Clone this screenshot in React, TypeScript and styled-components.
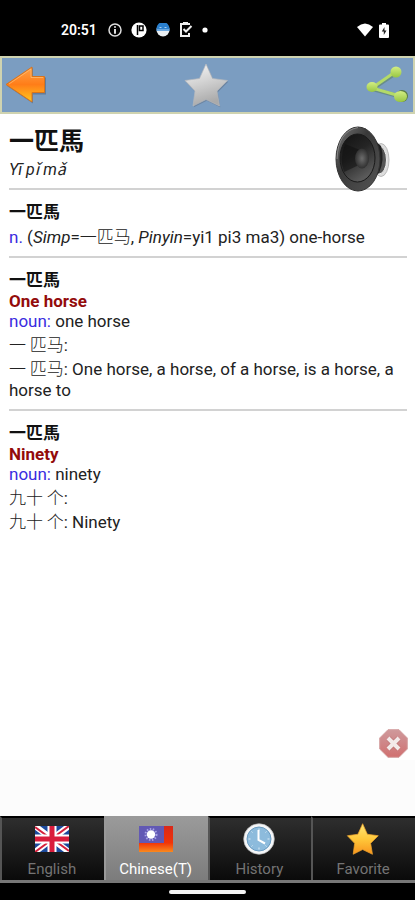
import React from "react";
import styled, { createGlobalStyle, css } from "styled-components";

const GlobalStyle = createGlobalStyle`
  * { box-sizing: border-box; }
  body {
    margin: 0;
    background: #fff;
    color: #222;
    font-family: Roboto, "Noto Sans CJK TC", sans-serif;
    font-size: 17px;
    line-height: 20px;
  }
  h1, h2, p { margin: 0; }
  svg { display: block; }
`;

const Screen = styled.div`
  display: flex;
  flex-direction: column;
  min-height: 100vh;
`;

const StatusBar = styled.header`
  display: flex;
  align-items: center;
  justify-content: space-between;
  height: 56px;
  padding: 4px 26px 0 61px;
  background: #000;
  color: #fff;
`;

const StatusGroup = styled.div<{ $gap: number }>`
  display: flex;
  align-items: center;
  gap: ${(p) => p.$gap}px;
`;

const Clock = styled.time`
  font-size: 14px;
  font-weight: 600;
  margin-right: 2px;
`;

const Toolbar = styled.div`
  display: flex;
  align-items: center;
  justify-content: space-between;
  height: 58px;
  padding: 0 5px 0 3px;
  background: #7b9dc1;
  border: 2px solid #cfd3b0;
`;

const IconButton = styled.button`
  display: block;
  padding: 0;
  border: 0;
  background: none;
  cursor: pointer;
`;

const Content = styled.main`
  flex: 1;
  padding: 12px 8px 12px 9px;
`;

const WordHeader = styled.div`
  display: flex;
  justify-content: space-between;
  height: 62px;
  padding-right: 16px;
`;

const Word = styled.h1`
  font-size: 25px;
  line-height: 32px;
  font-weight: 700;
  color: #111;
`;

const Pronunciation = styled.p`
  font-size: 16px;
  font-style: italic;
  line-height: 24px;
`;

const Entry = styled.section`
  border-top: 2px solid #d2d2d2;
  padding: 11px 0 8px;
`;

const Headword = styled.h2`
  font-size: 17px;
  line-height: 22px;
  font-weight: 700;
  color: #111;
`;

const Gloss = styled.p`
  font-weight: 700;
  color: #930b0b;
`;

const Line = styled.p``;

const Examples = styled.div`
  padding-top: 1px;
  line-height: 21px;
`;

const PartOfSpeech = styled.span`
  color: #3a2ce0;
`;

const Han = styled.span.attrs({ lang: "zh" })`
  font-family: "Noto Sans CJK TC", sans-serif;
  font-weight: 300;
  line-height: 24px;
`;

const AdSlot = styled.aside`
  position: relative;
  height: 56px;
  background: #fcfcfc;
`;

const AdClose = styled(IconButton)`
  position: absolute;
  right: 7px;
  bottom: 100%;
  margin-bottom: 2px;
`;

const TabBar = styled.nav`
  display: grid;
  grid-template-columns: repeat(4, 1fr);
  background: #000;
  border-bottom: 3px solid #777;
`;

const Tab = styled.button<{ $active?: boolean }>`
  display: flex;
  flex-direction: column;
  align-items: center;
  gap: 4px;
  height: 64px;
  padding: 5px 2px 0 0;
  border: 0;
  border-left: 2px solid #555;
  border-top: 2px solid #000;
  background: linear-gradient(#2e2e2e, #0a0a0a);
  color: #747474;
  font: 15px/20px Roboto, sans-serif;
  cursor: pointer;
  ${(p) =>
    p.$active &&
    css`
      border-color: #999;
      background: linear-gradient(#9a9a9a, #7c7c7c);
      color: #fff;
    `}
`;

const GestureBar = styled.footer`
  display: flex;
  justify-content: center;
  align-items: center;
  height: 17px;
  background: #000;
`;

const GestureHandle = styled.div`
  width: 77px;
  height: 4px;
  border-radius: 2px;
  background: #f5f5f5;
`;

const STAR = "M22 1 L28.5 15.5 L43.5 17.5 L33 28 L35.5 43 L22 36.5 L9 43 L11 28 L1 17.5 L15.5 15.5 Z";

const InfoIcon = () => (
  <svg width="14" height="14" viewBox="0 0 14 14" fill="none" stroke="#ddd" strokeWidth="1.5">
    <circle cx="7" cy="7" r="6" />
    <path d="M7 3.2v1.6M7 6v4.8" strokeWidth="2" />
  </svg>
);

const ParkIcon = () => (
  <svg width="16" height="16" viewBox="0 0 16 16">
    <circle cx="8" cy="8" r="7.6" fill="#fff" />
    <path d="M6.500 3V13M8.500 4h3.500v4.500H8.500Z" fill="none" stroke="#000" strokeWidth="1.500" />
  </svg>
);

const FaceIcon = () => (
  <svg width="14" height="14" viewBox="0 0 14 14">
    <circle cx="7" cy="7" r="6.500" fill="#e9eef2" />
    <path d="M.5 8V5.500A6.500 6.500 0 0 1 13.500 5.500V8Z" fill="#2a7fce" />
    <path d="M3.500 4.500h2M8.500 4.500h2M1 7h12" stroke="#a9d0f2" />
  </svg>
);

const TaskIcon = () => (
  <svg width="14" height="16" viewBox="0 0 14 16" fill="none" stroke="#eee" strokeWidth="2">
    <path d="M10 3V2H2v12h8v-3M4 1h5" />
    <path d="M4.500 7l2.500 2.500L12.500 4" />
  </svg>
);

const DotIcon = () => (
  <svg width="6" height="6" viewBox="0 0 6 6">
    <circle cx="3" cy="3" r="2.600" fill="#fff" />
  </svg>
);

const WifiIcon = () => (
  <svg width="16" height="14" viewBox="0 0 16 14">
    <path d="M0 4Q8-3 16 4L8 13.500Z" fill="#fff" />
  </svg>
);

const BatteryIcon = () => (
  <svg width="10" height="15" viewBox="0 0 10 15">
    <path d="M3 0h4v1.500h2q1 0 1 1V14q0 1-1 1H1q-1 0-1-1V2.500q0-1 1-1h2Z" fill="#fff" />
    <path d="M5.500 4L2.800 8.500h2V12l2.700-4.500h-2Z" fill="#222" />
  </svg>
);

const BackIcon = () => (
  <svg width="42" height="40" viewBox="0 0 42 40">
    <defs>
      <linearGradient id="back" x1="0" y1="0" x2="0" y2="1">
        <stop offset="0" stopColor="#ffa24a" />
        <stop offset=".5" stopColor="#ff7d18" />
        <stop offset="1" stopColor="#ffc81e" />
      </linearGradient>
    </defs>
    <path d="M2 21L28 3V12.500H41V29.500H28V38.500Z" fill="#526178" opacity=".55" />
    <path d="M1 19.500L27 2V11.500H39.500V27.500H27V37Z" fill="url(#back)" stroke="#d8741d" />
    <path d="M4 19L26 4V12.500H38" fill="none" stroke="#ffc078" opacity=".7" />
  </svg>
);

const SilverStarIcon = () => (
  <svg width="45" height="45" viewBox="0 0 45 45">
    <defs>
      <linearGradient id="silver" x1="0" y1="0" x2=".3" y2="1">
        <stop offset="0" stopColor="#f8f8f8" />
        <stop offset=".5" stopColor="#d3d3d3" />
        <stop offset="1" stopColor="#aaa" />
      </linearGradient>
    </defs>
    <path d={STAR} transform="translate(.8 1.300)" fill="#62758d" opacity=".6" />
    <path d={STAR} fill="url(#silver)" stroke="#b5b8bc" strokeWidth=".7" strokeLinejoin="round" />
  </svg>
);

const ShareIcon = () => (
  <svg width="42" height="38" viewBox="0 0 42 38">
    <defs>
      <linearGradient id="share" x1="0" y1="0" x2="0" y2="1">
        <stop offset="0" stopColor="#d3ee83" />
        <stop offset="1" stopColor="#98c643" />
      </linearGradient>
    </defs>
    <path d="M30 7L6 23L36 31" fill="none" stroke="#5e8266" strokeWidth="4" opacity=".6" />
    <circle cx="36" cy="30" r="6" fill="#5a7d43" />
    <path d="M29 6L6 22L34 30" fill="none" stroke="#b4da68" strokeWidth="3" />
    <circle cx="30" cy="6" r="5.500" fill="url(#share)" />
    <ellipse cx="6" cy="21" rx="5.500" ry="5" fill="url(#share)" />
    <ellipse cx="34.500" cy="30.500" rx="6.500" ry="5.500" fill="url(#share)" />
  </svg>
);

const SpeakerIcon = () => (
  <svg width="56" height="66" viewBox="0 0 56 66">
    <defs>
      <linearGradient id="rim" x1="0" y1="0" x2="1" y2="1">
        <stop offset="0" stopColor="#777" />
        <stop offset=".4" stopColor="#393939" />
        <stop offset="1" stopColor="#555" />
      </linearGradient>
      <linearGradient id="cone" x1="0" y1="0" x2=".5" y2="1">
        <stop offset="0" stopColor="#111" />
        <stop offset=".5" stopColor="#252525" />
        <stop offset="1" stopColor="#5a5a5a" />
      </linearGradient>
      <radialGradient id="cap">
        <stop offset="0" stopColor="#6c6c6c" />
        <stop offset="1" stopColor="#303030" />
      </radialGradient>
    </defs>
    <ellipse cx="46" cy="34" rx="8" ry="16.500" fill="#ddd" stroke="#bbb" />
    <ellipse cx="44" cy="34" rx="7.500" ry="14" fill="#555" stroke="#eee" />
    <path d="M30 2Q39 14 46 20Q50 34 44 47Q38 52 30 63Z" fill="#202020" />
    <ellipse cx="23" cy="33" rx="22" ry="32" fill="url(#rim)" stroke="#333" />
    <ellipse cx="22.500" cy="32" rx="17.500" ry="24" fill="url(#cone)" stroke="#1a1a1a" />
    <path d="M25 24L10 18Q4 33 9 46L24 39Z" fill="#111" opacity=".55" />
    <ellipse cx="27" cy="32.500" rx="7" ry="10" fill="url(#cap)" />
    <path d="M2 33Q3 5 23 1.500" fill="none" stroke="#999" opacity=".7" />
  </svg>
);

const CloseIcon = () => (
  <svg width="29" height="29" viewBox="0 0 29 29">
    <defs>
      <linearGradient id="stop" x1="0" y1="0" x2="0" y2="1">
        <stop offset="0" stopColor="#cf999b" />
        <stop offset=".5" stopColor="#cf8587" />
        <stop offset="1" stopColor="#d17070" />
      </linearGradient>
    </defs>
    <path d="M9 .7H20L28.300 9V20L20 28.300H9L.7 20V9Z" fill="url(#stop)" stroke="#d4a0a0" />
    <path d="M9.500 9.500l10 10M19.500 9.500l-10 10" stroke="#b06a6a" strokeWidth="5.500" opacity=".5" />
    <path d="M9 9l11 11M20 9L9 20" stroke="#f3eaea" strokeWidth="4" />
  </svg>
);

const UkFlag = () => (
  <svg width="34" height="32" viewBox="0 0 34 32">
    <svg y="3" width="34" height="26" viewBox="0 0 34 26">
      <path d="M0 0H34V26H0Z" fill="#1c4a9c" />
      <path d="M0 0L34 26M34 0L0 26" stroke="#fff" strokeWidth="6" />
      <path d="M0 1L15 12M34 0L19 11M0 26L15 15M34 25L19 14" stroke="#d5203c" strokeWidth="2" />
      <path d="M17 0V26M0 13H34" stroke="#fff" strokeWidth="9" />
      <path d="M17 0V26M0 13H34" stroke="#d91c3c" strokeWidth="5" />
    </svg>
  </svg>
);

const TaiwanFlag = () => (
  <svg width="34" height="32" viewBox="0 0 34 32">
    <defs>
      <linearGradient id="field" x1="0" y1="0" x2="0" y2="1">
        <stop offset="0" stopColor="#d9281a" />
        <stop offset=".65" stopColor="#f13408" />
        <stop offset="1" stopColor="#f98a1e" />
      </linearGradient>
    </defs>
    <path d="M0 3H34V29H0Z" fill="url(#field)" />
    <path d="M0 3H25V20H0Z" fill="#6259b4" />
    <circle cx="12" cy="11.500" r="5.500" fill="none" stroke="#a9a4e6" strokeWidth="2" strokeDasharray="1.500 1.500" />
    <circle cx="12" cy="11.500" r="4.200" fill="#fff" />
  </svg>
);

const HistoryIcon = () => (
  <svg width="32" height="32" viewBox="0 0 32 32">
    <circle cx="16" cy="16" r="15.300" fill="#f4f6f8" stroke="#bbb" strokeWidth=".7" />
    <circle cx="16" cy="16" r="12" fill="#8dbbdc" stroke="#6a9bc0" />
    <path d="M16 5.500v2M16 24.500v2M5.500 16h2M24.500 16h2M8.500 8.500l1 1M23.500 8.500l-1 1M8.500 23.500l1-1M23.500 23.500l-1-1" stroke="#dcecf6" />
    <path d="M15.500 7V17L22 20.500" fill="none" stroke="#fff" strokeWidth="2" />
  </svg>
);

const GoldStarIcon = () => (
  <svg width="34" height="32" viewBox="0 0 45 44">
    <defs>
      <linearGradient id="gold" x1="0" y1="0" x2="0" y2="1">
        <stop offset="0" stopColor="#ffe777" />
        <stop offset=".5" stopColor="#ffc83a" />
        <stop offset="1" stopColor="#f8941d" />
      </linearGradient>
    </defs>
    <path d={STAR} fill="url(#gold)" stroke="#eea22c" strokeLinejoin="round" />
  </svg>
);

const tabs = [
  { label: "English", icon: <UkFlag /> },
  { label: "Chinese(T)", icon: <TaiwanFlag />, active: true },
  { label: "History", icon: <HistoryIcon /> },
  { label: "Favorite", icon: <GoldStarIcon /> },
];

export default function App() {
  return (
    <>
      <GlobalStyle />
      <Screen>
        <StatusBar>
          <StatusGroup $gap={9}>
            <Clock>20:51</Clock>
            <InfoIcon />
            <ParkIcon />
            <FaceIcon />
            <TaskIcon />
            <DotIcon />
          </StatusGroup>
          <StatusGroup $gap={6}>
            <WifiIcon />
            <BatteryIcon />
          </StatusGroup>
        </StatusBar>
        <Toolbar>
          <IconButton aria-label="Back"><BackIcon /></IconButton>
          <IconButton aria-label="Add to favorites"><SilverStarIcon /></IconButton>
          <IconButton aria-label="Share"><ShareIcon /></IconButton>
        </Toolbar>
        <Content>
          <WordHeader>
            <div>
              <Word lang="zh-Hant">一匹馬</Word>
              <Pronunciation>Yī pǐ mǎ</Pronunciation>
            </div>
            <IconButton aria-label="Listen"><SpeakerIcon /></IconButton>
          </WordHeader>
          <Entry>
            <Headword lang="zh-Hant">一匹馬</Headword>
            <Examples>
              <Line>
                <PartOfSpeech>n.</PartOfSpeech> (<i>Simp</i>=<Han>一匹马</Han>, <i>Pinyin</i>=yi1 pi3 ma3) one-horse
              </Line>
            </Examples>
          </Entry>
          <Entry>
            <Headword lang="zh-Hant">一匹馬</Headword>
            <Gloss>One horse</Gloss>
            <Line><PartOfSpeech>noun:</PartOfSpeech> one horse</Line>
            <Examples>
              <Line><Han>一 匹马</Han>:</Line>
              <Line><Han>一 匹马</Han>: One horse, a horse, of a horse, is a horse, a horse to</Line>
            </Examples>
          </Entry>
          <Entry>
            <Headword lang="zh-Hant">一匹馬</Headword>
            <Gloss>Ninety</Gloss>
            <Line><PartOfSpeech>noun:</PartOfSpeech> ninety</Line>
            <Examples>
              <Line><Han>九十 个</Han>:</Line>
              <Line><Han>九十 个</Han>: Ninety</Line>
            </Examples>
          </Entry>
        </Content>
        <AdSlot>
          <AdClose aria-label="Close"><CloseIcon /></AdClose>
        </AdSlot>
        <TabBar>
          {tabs.map((t) => (
            <Tab key={t.label} $active={t.active} aria-current={t.active ? "page" : undefined}>
              {t.icon}
              {t.label}
            </Tab>
          ))}
        </TabBar>
        <GestureBar><GestureHandle /></GestureBar>
      </Screen>
    </>
  );
}
